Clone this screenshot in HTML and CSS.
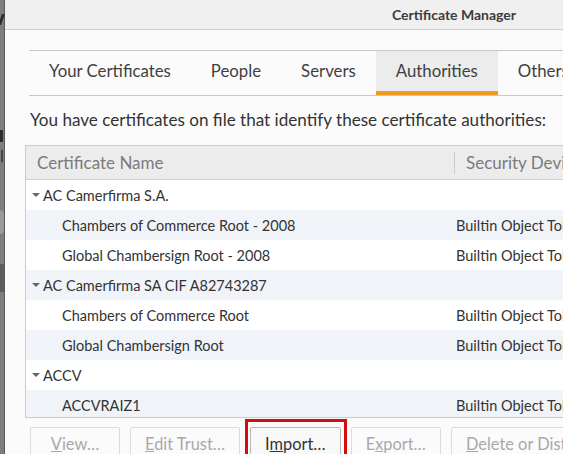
FILE: index.html
```html
<!DOCTYPE html>
<html lang="en">
  <head>
    <meta charset="UTF-8" />
    <meta name="viewport" content="width=device-width, initial-scale=1.0" />
    <title>Certificate Manager</title>
    <link rel="stylesheet" href="styles.css">
  </head>
  <body>
    <!-- the window behind the dialog -->
    <div class="backdrop">
      <span class="peek peek-a"></span>
      <span class="peek peek-f"></span>
      <span class="peek peek-v"></span>
      <span class="peek peek-round"></span>
      <span class="peek peek-block"></span>
    </div>

    <div class="dialog">
      <div class="titlebar">Certificate Manager</div>

      <div class="content">
        <div class="tabs">
          <div class="tab">Your Certificates</div>
          <div class="tab">People</div>
          <div class="tab">Servers</div>
          <div class="tab selected">Authorities</div>
          <div class="tab">Others</div>
        </div>

        <p class="intro">You have certificates on file that identify these certificate authorities:</p>

        <div class="tree">
          <div class="tree-head">
            <div class="col-name">Certificate Name</div>
            <div class="col-device">Security Device</div>
          </div>
          <div class="tree-body" id="tree-body"></div>
        </div>

        <div class="buttons">
          <button disabled><u>V</u>iew…</button>
          <button disabled><u>E</u>dit Trust…</button>
          <button class="highlight">I<u>m</u>port…</button>
          <button disabled>E<u>x</u>port…</button>
          <button disabled><u>D</u>elete or Distrust…</button>
        </div>
      </div>
    </div>

    <script>
      const certs = [
        { name: "AC Camerfirma S.A.", items: ["Chambers of Commerce Root - 2008", "Global Chambersign Root - 2008"] },
        { name: "AC Camerfirma SA CIF A82743287", items: ["Chambers of Commerce Root", "Global Chambersign Root"] },
        { name: "ACCV", items: ["ACCVRAIZ1"] },
        { name: "Actalis S.p.A./03358520967", items: ["Actalis Authentication Root CA"] }
      ];

      const body = document.getElementById("tree-body");
      certs.forEach((group) => {
        body.innerHTML += `
          <div class="row parent">
            <div class="col-name"><span class="twisty"></span>${group.name}</div>
            <div class="col-device"></div>
          </div>
        `;
        group.items.forEach((item) => {
          body.innerHTML += `
            <div class="row child">
              <div class="col-name">${item}</div>
              <div class="col-device">Builtin Object Token</div>
            </div>
          `;
        });
      });
    </script>
  </body>
</html>
```

FILE: styles.css
```css
body {
  margin: 0;
  padding: 0;
  display: flex;
  height: 454px;
  overflow: hidden;
  font-family: "Lato", "Roboto", sans-serif;
  color: #333;
  background-color: #7c7c7c;
}
.backdrop {
  position: relative;
  width: 4px;
  flex-shrink: 0;
  background-color: #7e7e7e;
}
.peek {
  position: absolute;
  left: 0;
  background-color: #2e2e2e;
}
.peek-a {
  top: 14px;
  width: 3px;
  height: 11px;
  transform: skewX(-20deg);
}
.peek-f {
  top: 130px;
  width: 3px;
  height: 12px;
}
.peek-v {
  top: 150px;
  width: 2px;
  height: 12px;
  left: 1px;
  background-color: #444;
}
.peek-round {
  top: 210px;
  width: 4px;
  height: 24px;
  border-radius: 0 4px 4px 0;
  background-color: #9a9a9a;
}
.peek-block {
  top: 264px;
  width: 4px;
  height: 28px;
  background-color: #5d5d5d;
}
.dialog {
  width: 898px;
  flex-shrink: 0;
  border-left: 1px solid #5a5a5a;
  background-color: #fbfbfb;
  display: flex;
  flex-direction: column;
}
.titlebar {
  height: 29px;
  line-height: 29px;
  text-align: center;
  font-size: 14px;
  font-weight: bold;
  color: #3c3c3c;
  background-color: #f0f0f0;
  border-bottom: 1px solid #cfcfcf;
}
.content {
  padding: 20px 18px 0 20px;
}
.tabs {
  display: flex;
  margin-left: 4px;
  border-top: 1px solid #c8c8c8;
  border-bottom: 1px solid #c8c8c8;
}
.tab {
  height: 40px;
  line-height: 40px;
  padding: 0 20px;
  font-size: 16.8px;
  color: #3f3f3f;
  border-bottom: 4px solid transparent;
  white-space: nowrap;
}
.tab.selected {
  background-color: #ececec;
  border-bottom-color: #f19a1b;
}
.intro {
  margin: 14px 0 0 5px;
  font-size: 17.1px;
  line-height: 20px;
  color: #333;
  white-space: nowrap;
}
.tree {
  margin-top: 15px;
  border: 1px solid #cbcbcb;
  background-color: #fff;
}
.tree-head,
.row {
  display: grid;
  grid-template-columns: 428px 1fr;
  align-items: center;
  white-space: nowrap;
}
.tree-head {
  height: 33px;
  background-color: #ececec;
  border-bottom: 1px solid #d2d2d2;
  font-size: 17px;
  color: #7b7b7b;
}
.tree-head .col-name {
  padding-left: 11px;
}
.tree-head .col-device {
  height: 22px;
  line-height: 22px;
  padding-left: 11px;
  border-left: 1px solid #cbcbcb;
}
.tree-body {
  height: 237px;
  overflow: hidden;
}
.row {
  height: 30px;
  font-size: 14.5px;
  color: #333;
}
.row:nth-child(even) {
  background-color: #f0f4f9;
}
.row.parent .col-name {
  display: flex;
  align-items: center;
  padding-left: 6px;
}
.row.child .col-name {
  padding-left: 36px;
}
.row .col-device {
  padding-left: 2px;
}
.twisty {
  width: 0;
  height: 0;
  margin-right: 3px;
  border-left: 4.5px solid transparent;
  border-right: 4.5px solid transparent;
  border-top: 4.5px solid #666;
}
.buttons {
  display: flex;
  gap: 10px;
  margin: 9px 0 0 5px;
}
.buttons button {
  min-width: 90px;
  height: 32px;
  padding: 0 14px;
  font-family: inherit;
  font-size: 16.4px;
  color: #333;
  background-color: #f8f8f8;
  border: 1px solid #b9b9b9;
  border-radius: 2px;
  white-space: nowrap;
}
.buttons button:disabled {
  color: #a9a9a9;
  background-color: #fbfbfb;
  border-color: #dcdcdc;
}
.buttons .highlight {
  position: relative;
}
.buttons .highlight::after {
  content: "";
  position: absolute;
  top: -9px;
  left: -6px;
  right: -7px;
  bottom: -12px;
  border: 3px solid #d20d0d;
}
```
